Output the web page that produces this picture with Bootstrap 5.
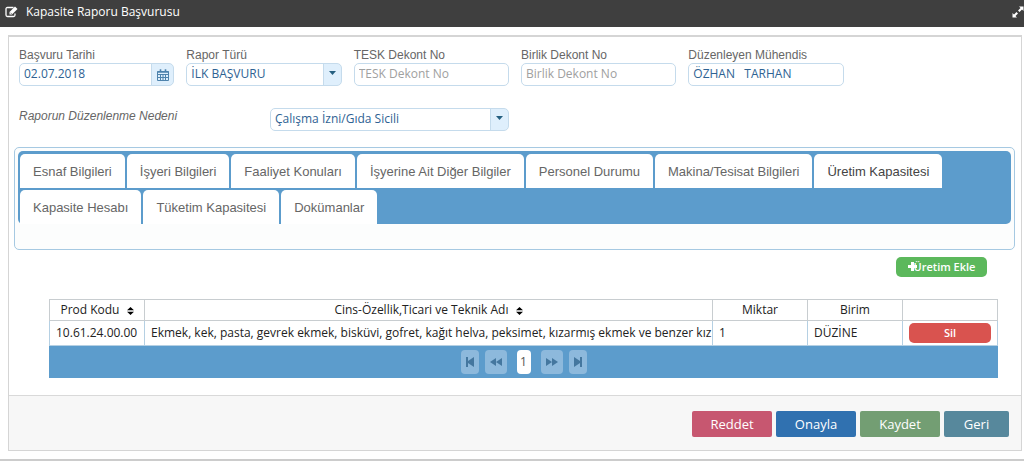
<!DOCTYPE html>
<html lang="tr">
<head>
<meta charset="utf-8">
<meta name="viewport" content="width=device-width, initial-scale=1">
<title>Kapasite Raporu Başvurusu</title>
<link href="https://cdn.jsdelivr.net/npm/bootstrap@5.3.0/dist/css/bootstrap.min.css" rel="stylesheet">
<style>
  :root { --line: #c5dbec; --bar: #5c9ccc; --ink: #2e6293; }
  body { font-family: "Open Sans", "Noto Sans", sans-serif; font-size: 12px; line-height: 16px; color: #222; }
  .title-bar { background: #3f3f3f; color: #fff; height: 27px; padding: 0 0 3px 5px; }
  .title-bar h1 { font-size: 12px; line-height: 16px; font-weight: 400; }
  .title-bar button, .cal-btn { border: 0; padding: 0; color: inherit; background: none; }
  .page-frame { padding: 8px 2px 8px 8px; border-bottom: 2px solid #ccc; }
  .form-panel { border: 1px solid #d5d5d5; border-top-width: 2px; }
  .fields { padding: 10px 4px 0; }
  .fields .row { --bs-gutter-x: 12px; margin: 0; }
  .fields .reason-row { margin-top: 22px; }
  .field-label { font-family: "Liberation Sans", sans-serif; color: #666; line-height: 16px; display: block; }
  .field-box { font-size: 12px; line-height: 16px; height: 23px; padding: 0 4px 2px; color: var(--ink); border: 1px solid var(--line); border-radius: 5px; background-color: #fff; min-height: 0; }
  .field-box::placeholder { color: #a0a0a0; opacity: 1; }
  .cal-btn { width: 23px; border: 1px solid var(--line); border-radius: 0 5px 5px 0; background: #dfeffc; color: #4e83ad; }
  .pick { appearance: none; width: 100%; display: block;
    background-image: url("data:image/svg+xml,%3Csvg xmlns='http://www.w3.org/2000/svg' viewBox='0 0 18 21'%3E%3Cpath d='M0 0h18v21H0z' fill='%23dfeffc'/%3E%3Cpath d='M0 0h1v21H0z' fill='%23c5dbec'/%3E%3Cpath d='M6 7h7l-3.5 4z' fill='%23245f80'/%3E%3C/svg%3E");
    background-repeat: no-repeat; background-position: right center; background-size: 18px 21px; }
  .tab-box { margin: 16px 6px 0 5px; padding: 3px 3px 25px; border: 1px solid #a6c9e2; border-radius: 5px; background: #fcfdfd; }
  .tab-strip { background: var(--bar); border-radius: 5px; padding: 3px 2px 0; gap: 2px; }
  .tab-strip .nav-link { font: 13px/16px "Liberation Sans", sans-serif; color: #666; background: #fff; border: 0; border-radius: 5px 5px 0 0; padding: 10px 13px 8px; }
  .tab-strip .nav-link.active { color: #444; }
  .data-area { padding: 7px 23px 17px 40px; }
  .add-btn, .del-btn { border: 0; border-radius: 5px; color: #fff; height: 20px; line-height: 18px; font-size: 11px; font-weight: 600; padding: 0; }
  .add-btn { background: #5cb85c; width: 91px; margin-right: 11px; }
  .add-btn svg { margin: -3px -3px 0 0; }
  .del-btn { background: #d9534f; width: 100%; }
  .goods { table-layout: fixed; width: 100%; margin-top: 22px; border-collapse: collapse; }
  .goods th, .goods td { border: 1px solid #b5d0e3; font-weight: 400; overflow: hidden; white-space: nowrap; padding: 0 6px; }
  .goods th { height: 21px; text-align: center; border-color: #c8cdd0; }
  .goods tbody td { height: 25px; }
  .goods tfoot td { background: var(--bar); border-color: var(--bar); height: 32px; }
  .c-side { width: 95px; }
  .pager { gap: 6px; }
  .pager button { border: 0; border-radius: 4px; height: 24px; padding: 0; background: #8db9dc; color: #44779f; }
  .pager .w-s { width: 18px; }
  .pager .w-m { width: 22px; }
  .pager .now { width: 14px; margin: 0 4px; background: #fff; color: #555; }
  .foot-bar { background: #f7f7f7; border-top: 1px solid #d9d9d9; padding: 15px 12px 13px; gap: 4px; }
  .foot-bar .btn { font-size: 13px; line-height: 18px; padding: 4px 17px; color: #fff; border: 0; border-radius: 2px; min-width: 65px; }
  .foot-bar .act { min-width: 80px; }
  .b-red { background: #c75770; } .b-blue { background: #3071b0; } .b-green { background: #739e73; } .b-teal { background: #57889c; }
</style>
</head>
<body>
<header class="title-bar d-flex align-items-center justify-content-between">
  <div class="d-flex align-items-center gap-2">
    <svg width="13" height="12" viewBox="0 0 13 12" fill="none" stroke="#fff" aria-hidden="true"><path d="M8.500 1.500H2.500Q1 1.500 1 3v6q0 1.500 1.500 1.500h6Q10 10.500 10 9V7.500" stroke-width="1.300"/><path d="M4.500 8.500V6L10 .5 12.500 3 7 8.500z" fill="#fff" stroke="none"/><path d="M5.600 6.800l.8.800" stroke="#3f3f3f"/></svg>
    <h1 class="m-0">Kapasite Raporu Başvurusu</h1>
  </div>
  <button type="button" class="d-flex" aria-label="Tam ekran"><svg width="12" height="12" viewBox="0 0 12 12" fill="#fff"><path d="M7 .5h4.500V5L10 3.500 7.500 6 6 4.500 8.500 2zM5 11.500H.5V7L2 8.500 4.500 6 6 7.500 3.500 10z"/></svg></button>
</header>
<main class="page-frame">
  <div class="form-panel">
    <form class="fields">
      <div class="row">
        <div class="col-2"><label class="field-label" for="tarih">Başvuru Tarihi</label>
          <div class="input-group flex-nowrap"><input id="tarih" class="form-control field-box" value="02.07.2018"><button type="button" class="cal-btn d-flex align-items-center justify-content-center" aria-label="Takvim"><svg width="12" height="12" viewBox="0 0 12 12" fill="none" stroke="currentColor"><path d="M.5 2.500h11v9H.5zM1 5.500h10M1 8.500h10M3.500 5v6.500M6 5v6.500M8.500 5v6.500"/><path d="M3.500.3v2.700M8.500.3v2.700M.5 3h11" stroke-width="1.600"/></svg></button></div></div>
        <div class="col-2"><label class="field-label" for="tur">Rapor Türü</label>
          <select id="tur" class="field-box pick"><option>İLK BAŞVURU</option></select></div>
        <div class="col-2"><label class="field-label" for="tesk">TESK Dekont No</label>
          <input id="tesk" class="form-control field-box" placeholder="TESK Dekont No"></div>
        <div class="col-2"><label class="field-label" for="birlik">Birlik Dekont No</label>
          <input id="birlik" class="form-control field-box" placeholder="Birlik Dekont No"></div>
        <div class="col-2"><label class="field-label" for="muh">Düzenleyen Mühendis</label>
          <input id="muh" class="form-control field-box" value="ÖZHAN   TARHAN"></div>
      </div>
      <div class="row reason-row">
        <div class="col-3"><label class="field-label fst-italic" for="neden">Raporun Düzenlenme Nedeni</label></div>
        <div class="col-3"><select id="neden" class="field-box pick"><option>Çalışma İzni/Gıda Sicili</option></select></div>
      </div>
    </form>
    <div class="tab-box">
      <nav class="tab-strip nav" role="tablist">
        <button type="button" role="tab" class="nav-link">Esnaf Bilgileri</button>
        <button type="button" role="tab" class="nav-link">İşyeri Bilgileri</button>
        <button type="button" role="tab" class="nav-link">Faaliyet Konuları</button>
        <button type="button" role="tab" class="nav-link">İşyerine Ait Diğer Bilgiler</button>
        <button type="button" role="tab" class="nav-link">Personel Durumu</button>
        <button type="button" role="tab" class="nav-link">Makina/Tesisat Bilgileri</button>
        <button type="button" role="tab" class="nav-link active" aria-selected="true">Üretim Kapasitesi</button>
        <button type="button" role="tab" class="nav-link">Kapasite Hesabı</button>
        <button type="button" role="tab" class="nav-link">Tüketim Kapasitesi</button>
        <button type="button" role="tab" class="nav-link">Dokümanlar</button>
      </nav>
    </div>
    <div class="data-area">
      <div class="d-flex justify-content-end"><button type="button" class="add-btn"><svg width="9" height="9" viewBox="0 0 9 9" fill="#fff" aria-hidden="true"><path d="M3 0h3v3h3v3H6v3H3V6H0V3h3z"/></svg>Üretim Ekle</button></div>
      <table class="goods">
        <colgroup><col class="c-side"><col><col class="c-side"><col class="c-side"><col class="c-side"></colgroup>
        <thead><tr>
          <th scope="col">Prod Kodu <svg class="ms-1" width="7" height="8" viewBox="0 0 7 8" aria-hidden="true"><path d="M0 3.300L3.500 0 7 3.300zM0 4.700h7L3.500 8z"/></svg></th>
          <th scope="col">Cins-Özellik,Ticari ve Teknik Adı <svg class="ms-1" width="7" height="8" viewBox="0 0 7 8" aria-hidden="true"><path d="M0 3.300L3.500 0 7 3.300zM0 4.700h7L3.500 8z"/></svg></th>
          <th scope="col">Miktar</th><th scope="col">Birim</th><th scope="col"></th>
        </tr></thead>
        <tbody><tr>
          <td>10.61.24.00.00</td>
          <td>Ekmek, kek, pasta, gevrek ekmek, bisküvi, gofret, kağıt helva, peksimet, kızarmış ekmek ve benzer kız</td>
          <td>1</td><td>DÜZİNE</td>
          <td><button type="button" class="del-btn d-block">Sil</button></td>
        </tr></tbody>
        <tfoot><tr><td colspan="5"><div class="pager d-flex justify-content-center align-items-center">
          <button type="button" class="w-s" aria-label="İlk"><svg width="8" height="10" viewBox="0 0 8 10" fill="currentColor"><path d="M0 0h2v4L8 0v10L2 6v4H0z"/></svg></button>
          <button type="button" class="w-m" aria-label="Önceki"><svg width="12" height="8" viewBox="0 0 12 8" fill="currentColor"><path d="M0 4l6-4v8zM6 4l6-4v8z"/></svg></button>
          <button type="button" class="now">1</button>
          <button type="button" class="w-m" aria-label="Sonraki"><svg width="12" height="8" viewBox="0 0 12 8" fill="currentColor"><path d="M0 0l6 4-6 4zM6 0l6 4-6 4z"/></svg></button>
          <button type="button" class="w-s" aria-label="Son"><svg width="8" height="10" viewBox="0 0 8 10" fill="currentColor"><path d="M8 0H6v4L0 0v10l6-4v4h2z"/></svg></button>
        </div></td></tr></tfoot>
      </table>
    </div>
    <footer class="foot-bar d-flex justify-content-end">
      <button type="button" class="btn act b-red">Reddet</button>
      <button type="button" class="btn act b-blue">Onayla</button>
      <button type="button" class="btn act b-green">Kaydet</button>
      <button type="button" class="btn b-teal">Geri</button>
    </footer>
  </div>
</main>
<script src="https://cdn.jsdelivr.net/npm/bootstrap@5.3.0/dist/js/bootstrap.bundle.min.js"></script>
</body>
</html>
